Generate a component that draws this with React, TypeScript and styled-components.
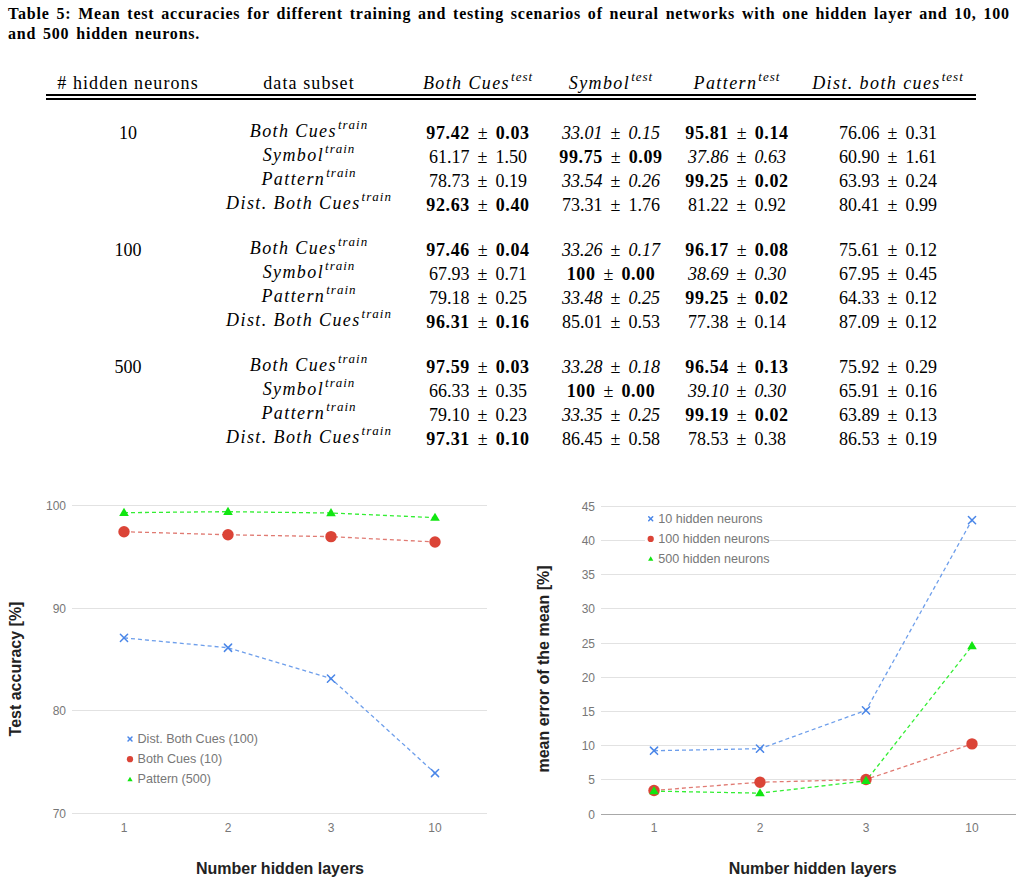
import React from 'react';
import styled, { createGlobalStyle } from 'styled-components';

const GlobalStyle = createGlobalStyle`
  html, body {
    margin: 0;
    padding: 0;
    background: #fff;
  }

  body {
    font-family: 'Liberation Serif', 'Times New Roman', serif;
    color: #000;
  }
`;

const Page = styled.main`
  width: 1022px;
  padding-top: 4px;
`;

const Caption = styled.p`
  margin: 0 0 0 8px;
  font-family: 'Liberation Serif', 'Times New Roman', serif;
  font-size: 16px;
  line-height: 20px;
  font-weight: 700;
  letter-spacing: 0.8px;
  word-spacing: 2px;
  white-space: nowrap;
`;

const cols = '164px 198px 140px 126px 126px 176px';

const TableWrap = styled.section`
  width: 930px;
  margin: 29px 0 0 46px;
  font-size: 18px;
`;

const HeadRow = styled.div`
  display: grid;
  grid-template-columns: ${cols};
  height: 20px;
  line-height: 20px;
  padding-bottom: 1px;
`;

const DoubleRule = styled.div`
  height: 2px;
  border-top: 2px solid #000;
  border-bottom: 2px solid #000;
`;

const Body = styled.div`
  margin-top: 21px;
  display: flex;
  flex-direction: column;
  gap: 21px;
`;

const Group = styled.div`
  display: flex;
  flex-direction: column;
`;

const Row = styled.div`
  display: grid;
  grid-template-columns: ${cols};
  height: 24px;
  line-height: 24px;
`;

const Cell = styled.div<{ $lift?: boolean }>`
  text-align: center;
  white-space: nowrap;
  line-height: ${(p) => (p.$lift ? '20px' : 'inherit')};
`;

const Text = styled.span`
  letter-spacing: 1.1px;
`;

const MathName = styled.span`
  font-style: italic;
  letter-spacing: 1.4px;
`;

const Sup = styled.sup`
  font-size: 13px;
  line-height: 0;
  vertical-align: 8px;
  letter-spacing: 1px;
  margin-left: 1px;
`;

const Num = styled.span<{ $kind: Kind }>`
  font-weight: ${(p) => (p.$kind === 'b' ? 700 : 400)};
  font-style: ${(p) => (p.$kind === 'i' ? 'italic' : 'normal')};
  letter-spacing: ${(p) => (p.$kind === 'b' ? '0.6px' : '0')};
`;

const Pm = styled.span`
  font-weight: 400;
  font-style: normal;
  padding: 0 8px;
`;

type Kind = 'b' | 'i' | 'n';
type Val = [Kind, string, string];
type DataRow = [string, Val, Val, Val, Val];

const groups: { n: string; rows: DataRow[] }[] = [
  {
    n: '10',
    rows: [
      ['Both Cues', ['b', '97.42', '0.03'], ['i', '33.01', '0.15'], ['b', '95.81', '0.14'], ['n', '76.06', '0.31']],
      ['Symbol', ['n', '61.17', '1.50'], ['b', '99.75', '0.09'], ['i', '37.86', '0.63'], ['n', '60.90', '1.61']],
      ['Pattern', ['n', '78.73', '0.19'], ['i', '33.54', '0.26'], ['b', '99.25', '0.02'], ['n', '63.93', '0.24']],
      ['Dist. Both Cues', ['b', '92.63', '0.40'], ['n', '73.31', '1.76'], ['n', '81.22', '0.92'], ['n', '80.41', '0.99']],
    ],
  },
  {
    n: '100',
    rows: [
      ['Both Cues', ['b', '97.46', '0.04'], ['i', '33.26', '0.17'], ['b', '96.17', '0.08'], ['n', '75.61', '0.12']],
      ['Symbol', ['n', '67.93', '0.71'], ['b', '100', '0.00'], ['i', '38.69', '0.30'], ['n', '67.95', '0.45']],
      ['Pattern', ['n', '79.18', '0.25'], ['i', '33.48', '0.25'], ['b', '99.25', '0.02'], ['n', '64.33', '0.12']],
      ['Dist. Both Cues', ['b', '96.31', '0.16'], ['n', '85.01', '0.53'], ['n', '77.38', '0.14'], ['n', '87.09', '0.12']],
    ],
  },
  {
    n: '500',
    rows: [
      ['Both Cues', ['b', '97.59', '0.03'], ['i', '33.28', '0.18'], ['b', '96.54', '0.13'], ['n', '75.92', '0.29']],
      ['Symbol', ['n', '66.33', '0.35'], ['b', '100', '0.00'], ['i', '39.10', '0.30'], ['n', '65.91', '0.16']],
      ['Pattern', ['n', '79.10', '0.23'], ['i', '33.35', '0.25'], ['b', '99.19', '0.02'], ['n', '63.89', '0.13']],
      ['Dist. Both Cues', ['b', '97.31', '0.10'], ['n', '86.45', '0.58'], ['n', '78.53', '0.38'], ['n', '86.53', '0.19']],
    ],
  },
];

function Measure({ v }: { v: Val }) {
  const [kind, a, b] = v;
  return (
    <Cell>
      <Num $kind={kind}>{a}</Num>
      <Pm>±</Pm>
      <Num $kind={kind}>{b}</Num>
    </Cell>
  );
}

function Label({ name, sup }: { name: string; sup: string }) {
  return (
    <MathName>
      {name}
      <Sup>{sup}</Sup>
    </MathName>
  );
}

/* ---------- charts ---------- */

const ChartRow = styled.div`
  display: flex;
  margin-top: 19px;
`;

const Plot = styled.svg`
  display: block;
  flex: none;
  overflow: visible;
`;

const GridLine = styled.line<{ $base?: boolean }>`
  stroke: ${(p) => (p.$base ? '#a8a8a8' : '#e2e2e2')};
  stroke-width: 1;
  shape-rendering: crispEdges;
`;

const TickLabel = styled.text<{ $anchor?: string }>`
  font-family: 'Liberation Sans', Arial, sans-serif;
  font-size: 12px;
  fill: #777;
  text-anchor: ${(p) => p.$anchor || 'end'};
  dominant-baseline: central;
`;

const AxisTitle = styled.text`
  font-family: 'Liberation Sans', Arial, sans-serif;
  font-size: 16px;
  font-weight: 700;
  fill: #222;
  text-anchor: middle;
  dominant-baseline: central;
`;

const Trace = styled.polyline`
  fill: none;
  stroke-width: 1.3;
  stroke-dasharray: 4 3;
`;

const LegendBox = styled.rect`
  fill: #fff;
`;

const LegendText = styled.text`
  font-family: 'Liberation Sans', Arial, sans-serif;
  font-size: 12.6px;
  fill: #777;
  dominant-baseline: central;
`;

type MarkerKind = 'x' | 'dot' | 'tri';

type Series = {
  name: string;
  color: string;
  line: string;
  marker: MarkerKind;
  values: number[];
};

function Marker({ kind, x, y, color, s = 1 }: { kind: MarkerKind; x: number; y: number; color: string; s?: number }) {
  if (kind === 'dot') return <circle cx={x} cy={y} r={5.7 * s} fill={color} />;
  if (kind === 'tri') {
    const w = 4.8 * s;
    return <polygon points={`${x},${y - 5 * s} ${x - w},${y + 3.2 * s} ${x + w},${y + 3.2 * s}`} fill={color} />;
  }
  const d = 3.6 * s;
  return (
    <g stroke={color} strokeWidth={1.5} strokeLinecap="round">
      <line x1={x - d} y1={y - d} x2={x + d} y2={y + d} />
      <line x1={x - d} y1={y + d} x2={x + d} y2={y - d} />
    </g>
  );
}

type ChartProps = {
  width: number;
  gridX: [number, number];
  cats: number[];
  ticks: number[];
  tickX: number;
  y: (v: number) => number;
  base?: number;
  series: Series[];
  legend: { x: number; y: number; box?: [number, number, number, number] };
  yTitle: string;
  yTitleX: number;
  xTitleX: number;
};

const catLabels = ['1', '2', '3', '10'];

function Chart(p: ChartProps) {
  return (
    <Plot width={p.width} height={413} viewBox={`0 0 ${p.width} 413`}>
      {p.ticks.map((t) => {
        const yy = Math.round(p.y(t)) + 0.5;
        return (
          <g key={t}>
            <GridLine x1={p.gridX[0]} x2={p.gridX[1]} y1={yy} y2={yy} $base={t === p.base} />
            <TickLabel x={p.tickX} y={yy}>
              {t}
            </TickLabel>
          </g>
        );
      })}
      {p.cats.map((cx, i) => (
        <TickLabel key={cx} x={cx} y={358} $anchor="middle">
          {catLabels[i]}
        </TickLabel>
      ))}
      {p.series.map((s) => (
        <Trace key={s.name} stroke={s.line} points={s.values.map((v, i) => `${p.cats[i]},${p.y(v)}`).join(' ')} />
      ))}
      {p.series.map((s) =>
        s.values.map((v, i) => (
          <Marker key={s.name + i} kind={s.marker} x={p.cats[i]} y={p.y(v)} color={s.color} />
        )),
      )}
      {p.legend.box && (
        <LegendBox x={p.legend.box[0]} y={p.legend.box[1]} width={p.legend.box[2]} height={p.legend.box[3]} />
      )}
      {p.series.map((s, i) => (
        <g key={s.name}>
          <Marker kind={s.marker} x={p.legend.x} y={p.legend.y + i * 20.2} color={s.color} s={0.55} />
          <LegendText x={p.legend.x + 7.5} y={p.legend.y + i * 20.2}>
            {s.name}
          </LegendText>
        </g>
      ))}
      <AxisTitle transform={`rotate(-90 ${p.yTitleX} 199)`} x={p.yTitleX} y={199}>
        {p.yTitle}
      </AxisTitle>
      <AxisTitle x={p.xTitleX} y={398}>
        Number hidden layers
      </AxisTitle>
    </Plot>
  );
}

const BLUE = '#4a86e8';
const BLUE_LINE = '#6d9eeb';
const RED = '#db4437';
const RED_LINE = '#e07a72';
const GREEN = '#11e611';
const GREEN_LINE = '#33ee33';

const accuracySeries: Series[] = [
  { name: 'Dist. Both Cues (100)', color: BLUE, line: BLUE_LINE, marker: 'x', values: [87.06, 86.1, 83.1, 73.9] },
  { name: 'Both Cues (10)', color: RED, line: RED_LINE, marker: 'dot', values: [97.4, 97.1, 96.92, 96.4] },
  { name: 'Pattern (500)', color: GREEN, line: GREEN_LINE, marker: 'tri', values: [99.25, 99.35, 99.22, 98.77] },
];

const errorSeries: Series[] = [
  { name: '10 hidden neurons', color: BLUE, line: BLUE_LINE, marker: 'x', values: [9.2, 9.5, 15.1, 42.9] },
  { name: '100 hidden neurons', color: RED, line: RED_LINE, marker: 'dot', values: [3.4, 4.6, 5.0, 10.2] },
  { name: '500 hidden neurons', color: GREEN, line: GREEN_LINE, marker: 'tri', values: [3.3, 3.0, 4.8, 24.5] },
];

export default function App() {
  return (
    <>
      <GlobalStyle />
      <Page>
        <Caption>
          Table 5: Mean test accuracies for different training and testing scenarios of neural networks with one hidden
          layer and 10, 100
          <br />
          and 500 hidden neurons.
        </Caption>

        <TableWrap>
          <HeadRow>
            <Cell>
              <Text># hidden neurons</Text>
            </Cell>
            <Cell>
              <Text>data subset</Text>
            </Cell>
            <Cell>
              <Label name="Both Cues" sup="test" />
            </Cell>
            <Cell>
              <Label name="Symbol" sup="test" />
            </Cell>
            <Cell>
              <Label name="Pattern" sup="test" />
            </Cell>
            <Cell>
              <Label name="Dist. both cues" sup="test" />
            </Cell>
          </HeadRow>
          <DoubleRule />

          <Body>
            {groups.map((g) => (
              <Group key={g.n}>
                {g.rows.map((r, i) => (
                  <Row key={r[0]}>
                    <Cell>{i === 0 ? g.n : ''}</Cell>
                    <Cell $lift>
                      <Label name={r[0]} sup="train" />
                    </Cell>
                    <Measure v={r[1]} />
                    <Measure v={r[2]} />
                    <Measure v={r[3]} />
                    <Measure v={r[4]} />
                  </Row>
                ))}
              </Group>
            ))}
          </Body>
        </TableWrap>

        <ChartRow>
          <Chart
            width={511}
            gridX={[72, 487]}
            cats={[124, 228, 331, 435]}
            ticks={[70, 80, 90, 100]}
            tickX={66}
            y={(v) => 35 + (100 - v) * 10.27}
            series={accuracySeries}
            legend={{ x: 130, y: 269 }}
            yTitle="Test accuracy [%]"
            yTitleX={15}
            xTitleX={280}
          />
          <Chart
            width={511}
            gridX={[90, 505]}
            cats={[143, 249, 355, 461]}
            ticks={[0, 5, 10, 15, 20, 25, 30, 35, 40, 45]}
            tickX={84}
            y={(v) => 343.7 - v * 6.844}
            base={0}
            series={errorSeries}
            legend={{ x: 139.7, y: 48.7, box: [134, 38, 125, 62] }}
            yTitle="mean error of the mean [%]"
            yTitleX={32}
            xTitleX={301.7}
          />
        </ChartRow>
      </Page>
    </>
  );
}
